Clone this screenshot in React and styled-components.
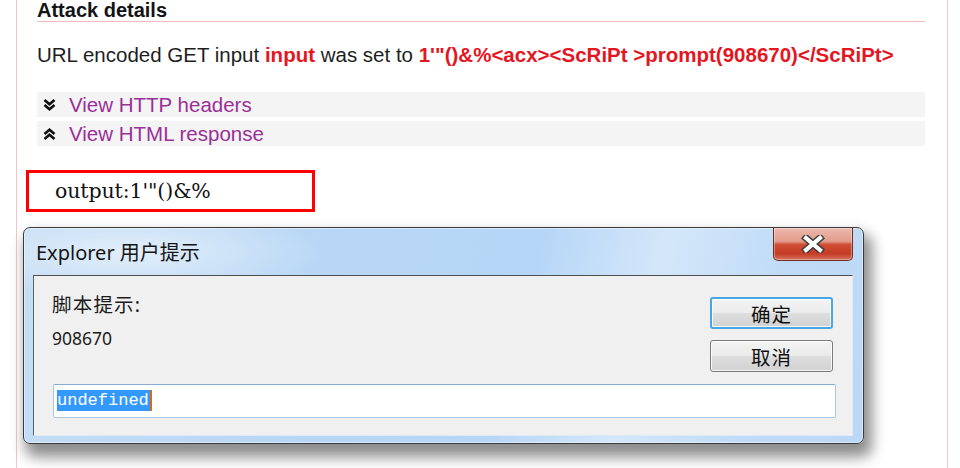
import React from "react";
import styled, { createGlobalStyle } from "styled-components";

const GlobalStyle = createGlobalStyle`
  html, body { margin: 0; padding: 0; background: #fff; overflow: hidden; }
  #root { width: 960px; height: 468px; overflow: hidden; }
  * { box-sizing: border-box; }
`;

const Page = styled.div`
  width: 960px;
  height: 468px;
  overflow: hidden;
  background: #fff;
  padding-left: 16px;
`;

const Panel = styled.div`
  width: 932px;
  height: 100%;
  border-left: 1px solid #f6c6c6;
  border-right: 1px solid #f6c6c6;
  padding: 0 22px 0 20px;
  font-family: "Liberation Sans", Arial, sans-serif;
`;

const Heading = styled.h3`
  margin: 0;
  padding-bottom: 1px;
  font-size: 20px;
  line-height: 20px;
  font-weight: bold;
  color: #141414;
  border-bottom: 1px solid #f6baba;
`;

const Para = styled.p`
  margin: 21px 0 0;
  font-size: 20.5px;
  line-height: 24px;
  color: #1e1e1e;
  white-space: nowrap;
`;

const Red = styled.b`
  color: #e4161f;
`;

const Toggles = styled.div`
  margin-top: 25px;
  display: flex;
  flex-direction: column;
  gap: 4px;
`;

const ToggleRow = styled.div`
  height: 25px;
  display: flex;
  align-items: center;
  gap: 13px;
  padding-left: 6px;
  background: #f4f4f4;
`;

const ToggleLink = styled.span`
  font-size: 20.5px;
  line-height: 25px;
  color: #9a2f98;
`;

const OutputBox = styled.div`
  margin: 24px 0 0 -11px;
  width: 289px;
  height: 42px;
  border: 3px solid #ff0000;
  padding-left: 26px;
  font-family: "DejaVu Serif", "Liberation Serif", serif;
  font-size: 20.5px;
  line-height: 36px;
  color: #111;
  letter-spacing: -0.1px;
`;

const Dialog = styled.div`
  margin: 15px 0 0 -14px;
  width: 841px;
  height: 217px;
  display: flex;
  flex-direction: column;
  border: 1px solid #3b3b3b;
  border-radius: 7px;
  padding: 0 10px 7px 9px;
  background:
    radial-gradient(ellipse 190px 45px at 110px 24px, rgba(255, 255, 255, 0.55), rgba(255, 255, 255, 0) 100%),
    linear-gradient(105deg, #c4ddf4 0%, #b8d7f6 35%, #b6d6f7 58%, #d4e7fa 72%, #c0dbf7 86%, #bad8f6 100%);
  box-shadow:
    inset 0 0 0 1px rgba(255, 255, 255, 0.45),
    5px 10px 14px 3px rgba(0, 0, 0, 0.45);
`;

const TitleBar = styled.div`
  height: 47px;
  display: flex;
  justify-content: space-between;
  align-items: flex-start;
`;

const Title = styled.div`
  align-self: center;
  padding-left: 3px;
  font-family: "Noto Sans", "Noto Sans CJK SC", sans-serif;
  font-size: 20px;
  color: #151515;
`;

const CloseButton = styled.div`
  width: 80px;
  height: 33px;
  display: flex;
  align-items: center;
  justify-content: center;
  border: 1px solid #6e2d22;
  border-top: none;
  border-radius: 0 0 5px 5px;
  background: linear-gradient(
    #ecb9ad 0%,
    #e29a89 42%,
    #cf4d33 52%,
    #c43c24 80%,
    #d8735d 100%
  );
  box-shadow: inset 0 0 0 1px rgba(255, 255, 255, 0.35);
`;

const Client = styled.div`
  flex: 1;
  display: grid;
  grid-template-columns: 1fr auto;
  grid-template-rows: auto auto;
  row-gap: 11px;
  padding: 21px 19px 17px 18px;
  background: #f0f0f0;
  border-top: 1px solid #4f4f4f;
  border-left: 1px solid #626262;
  border-right: 1px solid #dfeaf6;
  border-bottom: 1px solid #dfeaf6;
`;

const Labels = styled.div`
  display: flex;
  flex-direction: column;
  gap: 7px;
  margin-top: -5px;
  font-family: "Noto Sans", "Noto Sans CJK SC", sans-serif;
  color: #1c1c1c;
`;

const Label = styled.div`
  font-size: ${(p) => p.$size || 19.5}px;
  line-height: 26px;
  letter-spacing: ${(p) => (p.$cjk ? "1.2px" : "0")};
`;

const Buttons = styled.div`
  display: flex;
  flex-direction: column;
  gap: 11px;
`;

const Button = styled.div`
  width: 123px;
  height: 32px;
  display: flex;
  align-items: center;
  justify-content: center;
  border-radius: 3px;
  border: ${(p) => (p.$focused ? "2px solid #47a6e3" : "1px solid #7a7a7a")};
  background: linear-gradient(#f3f3f3 0%, #ebebeb 48%, #dddddd 52%, #d2d2d2 100%);
  box-shadow: inset 0 0 0 1px rgba(255, 255, 255, 0.8);
  font-family: "Noto Sans CJK SC", sans-serif;
  font-size: 19.5px;
  color: #111;
  letter-spacing: 1px;
`;

const InputBox = styled.div`
  grid-column: 1 / -1;
  margin: 0 -3px 0 1px;
  height: 34px;
  display: flex;
  align-items: center;
  padding-left: 3px;
  background: #fff;
  border: 1px solid #a9c7e2;
  border-top-color: #86acd1;
  border-radius: 2px;
`;

const Selected = styled.span`
  background: #3399ff;
  color: #fff;
  font-family: "Liberation Mono", "Courier New", monospace;
  font-size: 17px;
  line-height: 21px;
  height: 21px;
  padding-right: 1px;
`;

const Caret = styled.span`
  width: 2px;
  height: 21px;
  background: #d86a1a;
`;

function Chevrons({ up }) {
  const pts = up
    ? ["1.5,6 6.5,1.8 11.5,6", "1.5,11 6.5,6.8 11.5,11"]
    : ["1.5,1 6.5,5.2 11.5,1", "1.5,6 6.5,10.2 11.5,6"];
  return (
    <svg width="13" height="12" viewBox="0 0 13 12">
      {pts.map((p) => (
        <polyline key={p} points={p} fill="none" stroke="#111" strokeWidth="2.6" />
      ))}
    </svg>
  );
}

function CloseX() {
  const d = "M6 3 L20 15 M20 3 L6 15";
  return (
    <svg width="26" height="18" viewBox="0 0 26 18">
      <path d={d} stroke="#3d3d3d" strokeWidth="7" strokeLinecap="square" fill="none" />
      <path d={d} stroke="#ffffff" strokeWidth="4.2" strokeLinecap="square" fill="none" />
    </svg>
  );
}

export default function App() {
  return (
    <>
      <GlobalStyle />
      <Page>
        <Panel>
          <Heading>Attack details</Heading>
          <Para>
            URL encoded GET input <Red>input</Red> was set to{" "}
            <Red>{`1'"()&%<acx><ScRiPt >prompt(908670)</ScRiPt>`}</Red>
          </Para>
          <Toggles>
            <ToggleRow>
              <Chevrons />
              <ToggleLink>View HTTP headers</ToggleLink>
            </ToggleRow>
            <ToggleRow>
              <Chevrons up />
              <ToggleLink>View HTML response</ToggleLink>
            </ToggleRow>
          </Toggles>
          <OutputBox>{`output:1'"()&%`}</OutputBox>
          <Dialog>
            <TitleBar>
              <Title>Explorer 用户提示</Title>
              <CloseButton>
                <CloseX />
              </CloseButton>
            </TitleBar>
            <Client>
              <Labels>
                <Label $cjk>脚本提示:</Label>
                <Label $size={17.5}>908670</Label>
              </Labels>
              <Buttons>
                <Button $focused>确定</Button>
                <Button>取消</Button>
              </Buttons>
              <InputBox>
                <Selected>undefined</Selected>
                <Caret />
              </InputBox>
            </Client>
          </Dialog>
        </Panel>
      </Page>
    </>
  );
}
